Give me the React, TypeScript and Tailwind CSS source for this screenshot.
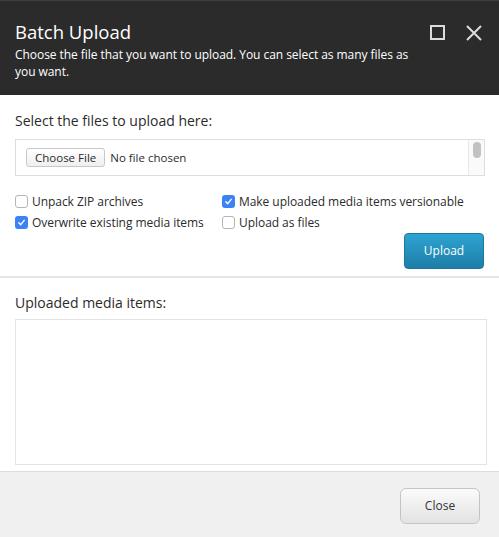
const font = { fontFamily: '"Open Sans", "Liberation Sans", sans-serif' };

function Check({ checked, label }: { checked: boolean; label: string }) {
  return (
    <label className="flex items-center gap-[4px] h-[21px] text-[12px] tracking-[-0.05px] text-[#2b2b2b] whitespace-nowrap">
      {checked ? (
        <span className="w-[13px] h-[13px] rounded-[3px] bg-[#3b82f6] flex items-center justify-center shrink-0">
          <svg width="9" height="9" viewBox="0 0 10 10">
            <path d="M2 5.2 L4.2 7.4 L8 2.6" fill="none" stroke="white" strokeWidth="1.6" strokeLinecap="round" strokeLinejoin="round" />
          </svg>
        </span>
      ) : (
        <span className="w-[13px] h-[13px] rounded-[3px] border border-[#b5b5b5] bg-white shrink-0" />
      )}
      <span>{label}</span>
    </label>
  );
}

export default function App() {
  return (
    <div className="w-[499px] h-[537px] flex flex-col bg-white overflow-hidden" style={font}>
      <div className="h-[95px] bg-[#2b2b2b] border-t border-[#3f3f3f] px-[15px] pt-[17px] flex justify-between shrink-0">
        <div>
          <div className="text-[18.5px] leading-[27px] text-white">Batch Upload</div>
          <div className="w-[410px] text-[12px] leading-[17px] tracking-[-0.05px] text-white mt-[1px]">
            Choose the file that you want to upload. You can select as many files as you want.
          </div>
        </div>
        <div className="flex gap-[21px] pt-[7px] pr-[2px]">
          <svg width="15" height="15" viewBox="0 0 15 15">
            <rect x="1" y="1" width="13" height="13" fill="none" stroke="#dcdcdc" strokeWidth="2" />
          </svg>
          <svg width="16" height="16" viewBox="0 0 16 16">
            <path d="M1 1 L15 15 M15 1 L1 15" stroke="#dcdcdc" strokeWidth="2" />
          </svg>
        </div>
      </div>

      <div className="px-[15px] pt-[16px]">
        <div className="text-[14px] leading-[20px] text-[#2b2b2b]">Select the files to upload here:</div>
        <div className="mt-[8px] h-[37px] w-[470px] border border-[#dedede] flex items-center justify-between">
          <div className="flex items-center pl-[10px] text-[11.5px] text-[#2b2b2b]">
            <span className="h-[19px] px-[8px] flex items-center rounded-[3px] border border-[#c8c8c8] bg-gradient-to-b from-white to-[#efefef]">
              Choose File
            </span>
            <span className="ml-[5px]">No file chosen</span>
          </div>
          <div className="h-full w-[16px] border-l border-[#e8e8e8] bg-[#fafafa] flex justify-center pt-[2px]">
            <span className="w-[8px] h-[16px] rounded-full bg-[#c2c2c2]" />
          </div>
        </div>

        <div className="mt-[15px] grid grid-cols-[207px_1fr]">
          <Check checked={false} label="Unpack ZIP archives" />
          <Check checked label="Make uploaded media items versionable" />
          <Check checked label="Overwrite existing media items" />
          <Check checked={false} label="Upload as files" />
        </div>

        <div className="flex justify-end mt-[0px]">
          <button className="w-[80px] h-[36px] rounded-[4px] bg-gradient-to-b from-[#2ea4d2] to-[#1d7ea8] text-white text-[12px] border border-[#1c77a0]">
            Upload
          </button>
        </div>
      </div>

      <div className="mt-[7px] h-[2px] bg-[#e6e6e6]" />

      <div className="px-[15px] pt-[15px] flex-1 flex flex-col">
        <div className="text-[14px] leading-[20px] text-[#2b2b2b]">Uploaded media items:</div>
        <div className="mt-[6px] h-[146px] w-[472px] border border-[#e3e3e3]" />
      </div>

      <div className="h-[66px] bg-[#f0f0f0] border-t border-[#dcdcdc] flex justify-end items-start pt-[16px] pr-[19px] shrink-0">
        <button className="w-[80px] h-[36px] rounded-[6px] border border-[#c4c4c4] bg-gradient-to-b from-[#fbfbfb] to-[#e3e3e3] text-[12px] text-[#333]">
          Close
        </button>
      </div>
    </div>
  );
}
